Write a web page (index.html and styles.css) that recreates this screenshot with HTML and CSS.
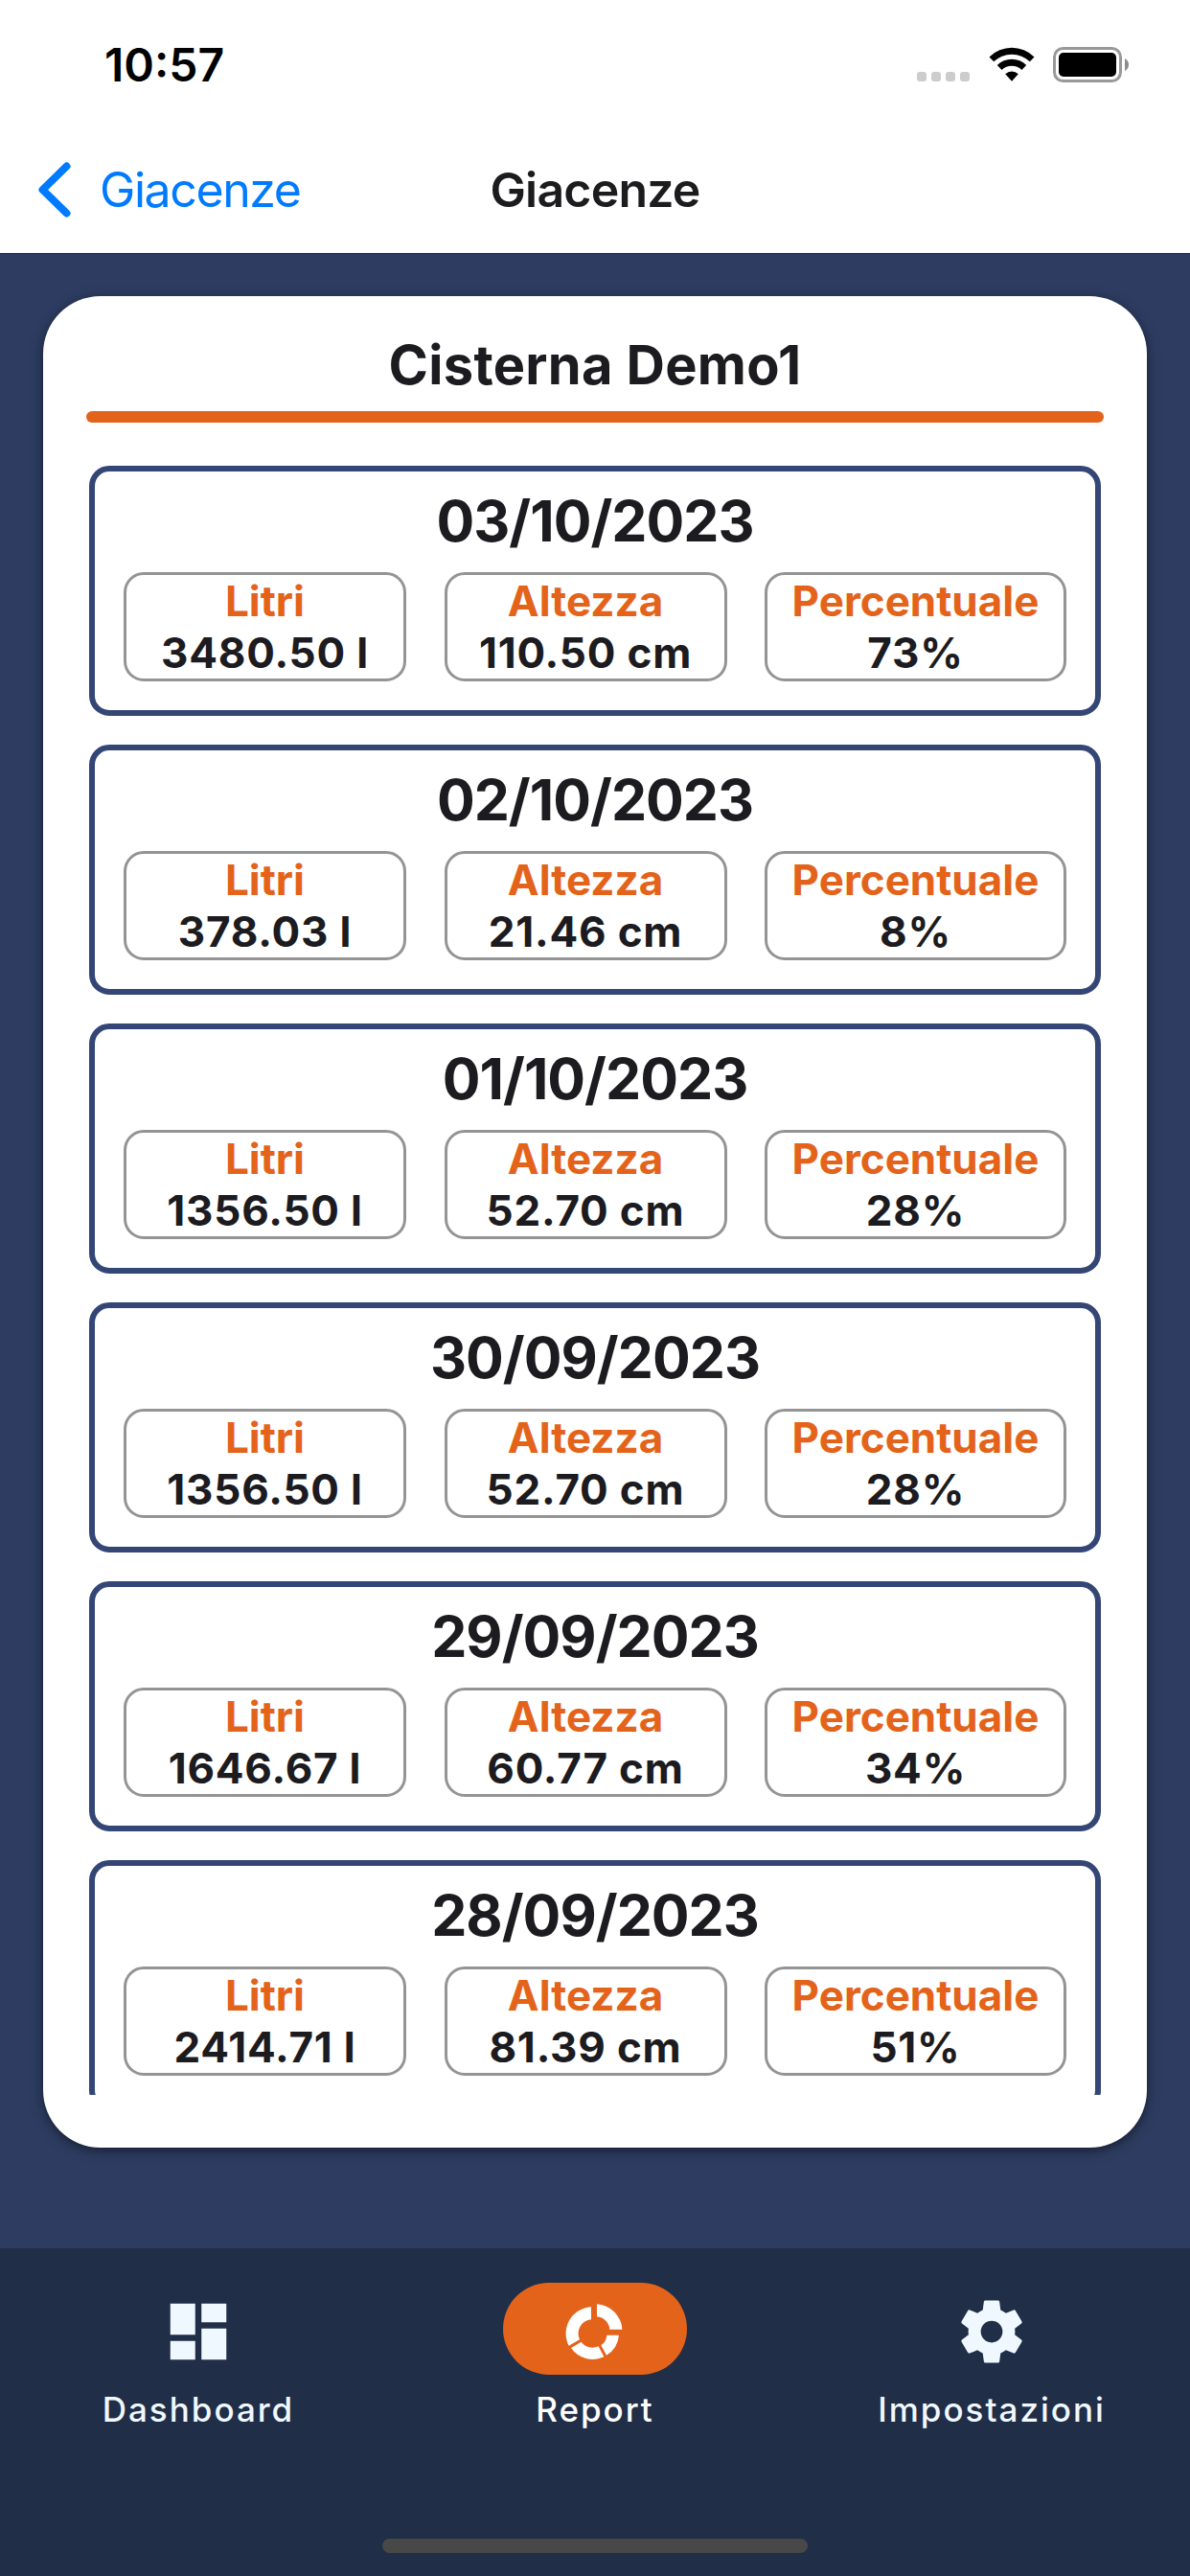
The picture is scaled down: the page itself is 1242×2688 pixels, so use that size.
FILE: index.html
```
<!DOCTYPE html>
<html lang="it">
<head>
    <meta charset="UTF-8">
    <title>Giacenze</title>
    <link rel="stylesheet" href="styles.css">
</head>
<body>
    <header class="header">
        <div class="status-bar">
            <span class="time">10:57</span>
            <div class="status-icons">
                <div class="signal"><i></i><i></i><i></i><i></i></div>
                <svg class="wifi" viewBox="0 0 48 36">
                    <path d="M0.5 10.5a33.5 33.5 0 0 1 47 0l-4.7 4.8a27 27 0 0 0-37.6 0z"/>
                    <path d="M8.8 19a21.6 21.6 0 0 1 30.4 0l-4.8 4.9a15 15 0 0 0-20.800 0z"/>
                    <path d="M17.2 28.2a10 10 0 0 1 13.6 0L24 35.8z"/>
                </svg>
                <svg class="battery" viewBox="0 0 80 37">
                    <rect x="1.5" y="1.5" width="69" height="34" rx="9" fill="none" stroke="#999" stroke-width="3"/>
                    <rect x="6" y="6" width="60" height="25" rx="5"/>
                    <path d="M75 12q4 2.500 4 6.500t-4 6.500z" fill="#8c8c8c"/>
                </svg>
            </div>
        </div>
        <div class="nav-bar">
            <a class="back">
                <svg viewBox="0 0 34 58"><path d="M29.500 4.500L4.500 29l25 24.500"/></svg>
                <span>Giacenze</span>
            </a>
            <h1>Giacenze</h1>
        </div>
    </header>

    <main class="content">
        <section class="card">
            <h2>Cisterna Demo1</h2>
            <div class="divider"></div>
            <div class="list">
                <div class="row">
                    <h3>03/10/2023</h3>
                    <div class="values">
                        <div class="cell"><b>Litri</b><span>3480.50 l</span></div>
                        <div class="cell"><b>Altezza</b><span>110.50 cm</span></div>
                        <div class="cell"><b>Percentuale</b><span>73%</span></div>
                    </div>
                </div>
                <div class="row">
                    <h3>02/10/2023</h3>
                    <div class="values">
                        <div class="cell"><b>Litri</b><span>378.03 l</span></div>
                        <div class="cell"><b>Altezza</b><span>21.46 cm</span></div>
                        <div class="cell"><b>Percentuale</b><span>8%</span></div>
                    </div>
                </div>
                <div class="row">
                    <h3>01/10/2023</h3>
                    <div class="values">
                        <div class="cell"><b>Litri</b><span>1356.50 l</span></div>
                        <div class="cell"><b>Altezza</b><span>52.70 cm</span></div>
                        <div class="cell"><b>Percentuale</b><span>28%</span></div>
                    </div>
                </div>
                <div class="row">
                    <h3>30/09/2023</h3>
                    <div class="values">
                        <div class="cell"><b>Litri</b><span>1356.50 l</span></div>
                        <div class="cell"><b>Altezza</b><span>52.70 cm</span></div>
                        <div class="cell"><b>Percentuale</b><span>28%</span></div>
                    </div>
                </div>
                <div class="row">
                    <h3>29/09/2023</h3>
                    <div class="values">
                        <div class="cell"><b>Litri</b><span>1646.67 l</span></div>
                        <div class="cell"><b>Altezza</b><span>60.77 cm</span></div>
                        <div class="cell"><b>Percentuale</b><span>34%</span></div>
                    </div>
                </div>
                <div class="row">
                    <h3>28/09/2023</h3>
                    <div class="values">
                        <div class="cell"><b>Litri</b><span>2414.71 l</span></div>
                        <div class="cell"><b>Altezza</b><span>81.39 cm</span></div>
                        <div class="cell"><b>Percentuale</b><span>51%</span></div>
                    </div>
                </div>
            </div>
        </section>
    </main>

    <footer class="footer">
        <nav class="tabs">
            <a class="tab">
                <div class="pill">
                    <svg viewBox="0 0 24 24"><path d="M3 13h8V3H3v10zm0 8h8v-6H3v6zm10 0h8V11h-8v10zm0-18v6h8V3h-8z"/></svg>
                </div>
                <span>Dashboard</span>
            </a>
            <a class="tab active">
                <div class="pill">
                    <svg viewBox="0 0 234 234">
                        <path d="M105 40A83 83 0 0 0 35 161L69 142A44 44 0 0 1 105 79z"/>
                        <path d="M42 168A83 83 0 0 0 145 196L128 163A44 44 0 0 1 74 149z"/>
                        <path d="M153 191A83 83 0 0 0 192 128H154A44 44 0 0 1 136 160z"/>
                        <path d="M123 31A83 83 0 0 1 202 110H163A44 44 0 0 0 123 70z"/>
                    </svg>
                </div>
                <span>Report</span>
            </a>
            <a class="tab">
                <div class="pill">
                    <svg viewBox="0 0 24 24"><path d="M12 15.500A3.500 3.500 0 0 1 8.500 12 3.500 3.500 0 0 1 12 8.500a3.500 3.500 0 0 1 3.500 3.500 3.500 3.500 0 0 1-3.500 3.500m7.430-2.530c.04-.32.07-.64.07-.97s-.03-.66-.07-1l2.110-1.630c.19-.15.24-.42.12-.64l-2-3.460c-.12-.22-.39-.31-.61-.22l-2.490 1c-.52-.39-1.060-.73-1.690-.98l-.37-2.650A.506.506 0 0 0 14 2h-4c-.25 0-.46.18-.5.42l-.37 2.650c-.63.25-1.170.59-1.690.98l-2.490-1c-.22-.09-.49 0-.61.22l-2 3.460c-.13.22-.07.49.12.64L4.570 11c-.04.34-.07.67-.07 1s.03.65.07.97l-2.110 1.660c-.19.15-.25.42-.12.64l2 3.460c.12.22.39.3.61.22l2.490-1.010c.52.4 1.060.74 1.690.99l.37 2.650c.04.24.25.42.5.42h4c.25 0 .46-.18.5-.42l.37-2.650c.63-.26 1.170-.59 1.690-.99l2.490 1.010c.22.08.49 0 .61-.22l2-3.460c.12-.22.07-.49-.12-.64z"/></svg>
                </div>
                <span>Impostazioni</span>
            </a>
        </nav>
        <div class="home-indicator"></div>
    </footer>
</body>
</html>
```
FILE: styles.css
```
* {
    box-sizing: border-box;
}
body {
    margin: 0;
    width: 1242px;
    height: 2688px;
    display: flex;
    flex-direction: column;
    overflow: hidden;
    font-family: Inter, "Liberation Sans", sans-serif;
    color: #1c1b1f;
    background: #2d3c60;
}
h1, h2, h3 {
    margin: 0;
    font-weight: 700;
    text-align: center;
}
svg {
    display: block;
}

/* header */
.header {
    height: 264px;
    background: #fff;
    flex-shrink: 0;
}
.status-bar {
    height: 132px;
    padding: 0 63px 0 109px;
    display: flex;
    justify-content: space-between;
}
.time {
    margin-top: 38px;
    line-height: 60px;
    font-size: 48px;
    font-weight: 600;
    color: #000;
}
.status-icons {
    display: flex;
    align-items: flex-start;
    padding-top: 49px;
}
.signal {
    display: flex;
    gap: 5px;
    margin: 26px 20px 0 0;
}
.signal i {
    width: 10px;
    height: 10px;
    border-radius: 3px;
    background: #ccc;
}
.wifi {
    width: 48px;
    height: 36px;
    margin-right: 19px;
}
.battery {
    width: 80px;
    height: 37px;
}
.nav-bar {
    height: 132px;
    padding: 0 40px;
    display: grid;
    grid-template-columns: 1fr auto 1fr;
    align-items: center;
}
.back {
    display: flex;
    align-items: center;
    font-size: 50px;
    letter-spacing: -1.4px;
    color: #007aff;
}
.back svg {
    width: 34px;
    height: 58px;
    margin-right: 30px;
    fill: none;
    stroke: currentColor;
    stroke-width: 8;
    stroke-linecap: round;
    stroke-linejoin: round;
}
.nav-bar h1 {
    font-size: 50px;
    font-weight: 600;
    letter-spacing: -0.8px;
    color: #1c1c1e;
}

/* card */
.content {
    height: 2082px;
    padding: 45px 45px 105px;
    border-top: 1px solid #222e49;
    flex-shrink: 0;
}
.card {
    height: 1932px;
    margin-top: -1px;
    padding: 36px 45px 55px;
    display: flex;
    flex-direction: column;
    background: #fff;
    border-radius: 60px;
    box-shadow: 0 3px 9px rgba(0, 0, 0, 0.4), 0 3px 18px rgba(0, 0, 0, 0.12);
}
.card h2 {
    line-height: 72px;
    font-size: 56px;
    letter-spacing: 0.3px;
}
.divider {
    height: 12px;
    margin: 12px 0 45px;
    border-radius: 6px;
    background: #e4631a;
    flex-shrink: 0;
}
.list {
    flex: 1;
    min-height: 0;
    padding: 0 3px;
    overflow: hidden;
}
.row {
    height: 261px;
    margin-bottom: 30px;
    padding: 16px 30px 0;
    border: 6px solid #344676;
    border-radius: 21px;
}
.row h3 {
    margin-bottom: 17px;
    line-height: 72px;
    font-size: 59px;
    letter-spacing: -1px;
}
.values {
    display: grid;
    grid-template-columns: 295px 295px 315px;
    justify-content: space-between;
}
.cell {
    height: 114px;
    display: flex;
    flex-direction: column;
    border: 3px solid #949494;
    border-radius: 21px;
    text-align: center;
    font-size: 44px;
    font-weight: 700;
    line-height: 54px;
}
.cell b {
    font-weight: 700;
    color: #e4631a;
}
.cell span {
    letter-spacing: 0.8px;
}

/* bottom tabs */
.footer {
    flex: 1;
    padding: 36px 0 24px;
    display: flex;
    flex-direction: column;
    justify-content: space-between;
    align-items: center;
    background: #212e48;
}
.tabs {
    width: 100%;
    display: grid;
    grid-template-columns: repeat(3, 1fr);
}
.tab {
    display: flex;
    flex-direction: column;
    align-items: center;
    color: #f0f8ff;
    font-size: 35px;
    font-weight: 500;
    line-height: 48px;
    letter-spacing: 2px;
}
.pill {
    width: 192px;
    height: 96px;
    margin-bottom: 12px;
    padding-top: 12px;
    border-radius: 48px;
}
.pill svg {
    width: 78px;
    height: 78px;
    margin: 0 auto;
    fill: currentColor;
}
.active {
    color: #fff;
}
.active .pill {
    background: #e4631a;
}
.home-indicator {
    width: 444px;
    height: 15px;
    border-radius: 8px;
    background: #484848;
}
```
